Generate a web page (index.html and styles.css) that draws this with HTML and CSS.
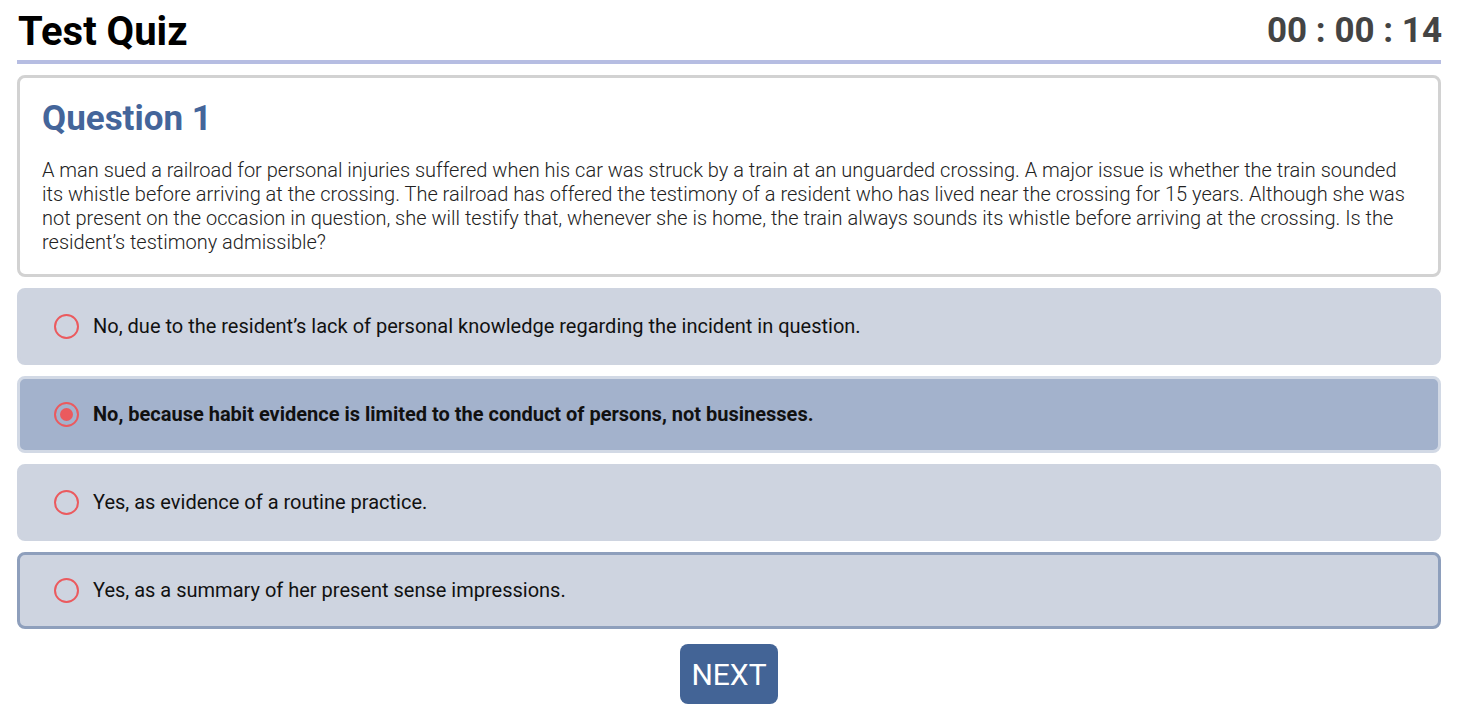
FILE: index.html
```html
<!DOCTYPE html>
<html lang="en">
<head>
<meta charset="utf-8">
<title>Test Quiz</title>
<link rel="stylesheet" href="styles.css">
</head>
<body>
<div class="page">
  <header class="header">
    <h1 class="title">Test Quiz</h1>
    <div class="timer">00 : 00 : 14</div>
  </header>
  <section class="card">
    <h2 class="q-title">Question 1</h2>
    <p class="q-text">A man sued a railroad for personal injuries suffered when his car was struck by a train at an unguarded crossing. A major issue is whether the train sounded its whistle before arriving at the crossing. The railroad has offered the testimony of a resident who has lived near the crossing for 15 years. Although she was not present on the occasion in question, she will testify that, whenever she is home, the train always sounds its whistle before arriving at the crossing. Is the resident’s testimony admissible?</p>
  </section>
  <div class="options">
    <label class="option"><span class="radio"></span><span class="opt-text">No, due to the resident’s lack of personal knowledge regarding the incident in question.</span></label>
    <label class="option selected"><span class="radio checked"></span><span class="opt-text">No, because habit evidence is limited to the conduct of persons, not businesses.</span></label>
    <label class="option"><span class="radio"></span><span class="opt-text">Yes, as evidence of a routine practice.</span></label>
    <label class="option hover"><span class="radio"></span><span class="opt-text">Yes, as a summary of her present sense impressions.</span></label>
  </div>
  <div class="actions">
    <button class="next">NEXT</button>
  </div>
</div>
</body>
</html>
```
FILE: styles.css
```css
* { box-sizing: border-box; }
html, body { margin: 0; padding: 0; background: #fff; }
body { font-family: Roboto, "Noto Sans", sans-serif; color: #111; }
.page { padding: 0 17px; display: flex; flex-direction: column; }
.header {
  display: flex; justify-content: space-between; align-items: flex-end;
  height: 64px; border-bottom: 4px solid #b6bde2; padding: 0 0 5px 1px;
}
.title { margin: 0; font-size: 40px; font-weight: 700; line-height: 46px; color: #000; }
.timer { font-size: 35px; font-weight: 700; color: #444; line-height: 40px; padding-bottom: 4px; margin-right: -1px; }
.card {
  margin-top: 11px; border: 3px solid #d2d2d2; border-radius: 8px;
  padding: 21px 22px 20px 22px;
}
.q-title { margin: 0; font-size: 35px; font-weight: 700; color: #44659a; line-height: 40px; }
.q-text { margin: 19px 0 0 0; font-size: 20px; font-weight: 300; line-height: 24px; color: #222; }
.options { display: flex; flex-direction: column; gap: 11px; margin-top: 11px; }
.option {
  display: flex; align-items: center; gap: 14px; height: 77px;
  background: #ced4e0; border: 3px solid #ced4e0; border-radius: 8px;
  padding: 0 0 0 34px; font-size: 20px; color: #111;
}
.opt-text { margin-bottom: 2px; }
.option.selected { background: #a3b2cc; border-color: #d2d9e5; font-weight: 700; }
.option.hover { border-color: #8e9fbc; }
.radio {
  width: 25px; height: 25px; border: 2.5px solid #eb5a5e; border-radius: 50%;
  flex: none; display: flex; align-items: center; justify-content: center;
}
.radio.checked::after {
  content: ""; width: 13px; height: 13px; border-radius: 50%; background: #eb5a5e;
}
.actions { display: flex; justify-content: center; margin-top: 15px; }
.next {
  width: 98px; height: 60px; background: #436496; color: #fff; border: none;
  border-radius: 8px; font-family: Roboto, sans-serif; font-size: 30px; font-weight: 400;
  padding: 0;
}
```
